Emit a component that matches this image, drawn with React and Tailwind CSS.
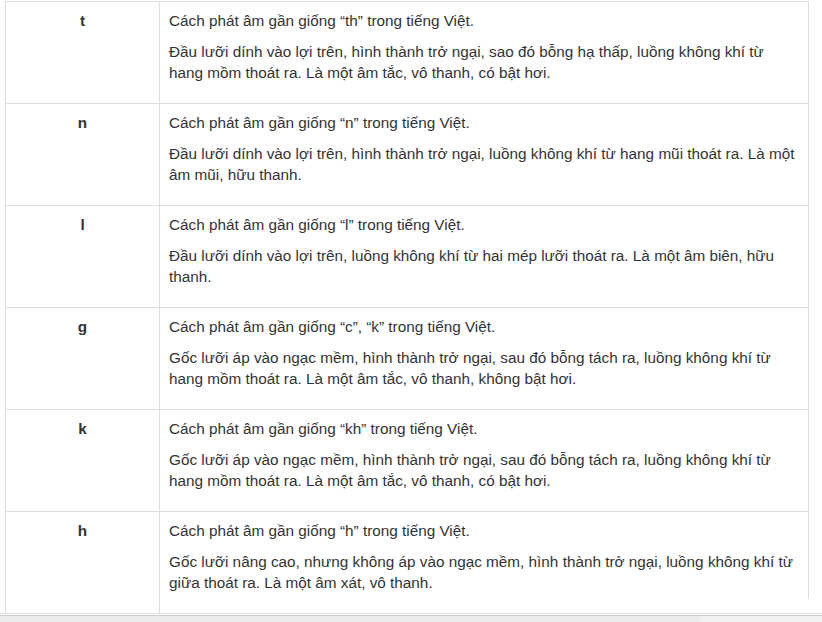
import React from 'react'

const rows = [
  {
    letter: 't',
    like: '“th”',
    desc: 'Đầu lưỡi dính vào lợi trên, hình thành trở ngại, sao đó bỗng hạ thấp, luồng không khí từ hang mồm thoát ra. Là một âm tắc, vô thanh, có bật hơi.',
  },
  {
    letter: 'n',
    like: '“n”',
    desc: 'Đầu lưỡi dính vào lợi trên, hình thành trở ngại, luồng không khí từ hang mũi thoát ra. Là một âm mũi, hữu thanh.',
  },
  {
    letter: 'l',
    like: '“l”',
    desc: 'Đầu lưỡi dính vào lợi trên, luồng không khí từ hai mép lưỡi thoát ra. Là một âm biên, hữu thanh.',
  },
  {
    letter: 'g',
    like: '“c”, “k”',
    desc: 'Gốc lưỡi áp vào ngạc mềm, hình thành trở ngại, sau đó bỗng tách ra, luồng không khí từ hang mồm thoát ra. Là một âm tắc, vô thanh, không bật hơi.',
  },
  {
    letter: 'k',
    like: '“kh”',
    desc: 'Gốc lưỡi áp vào ngạc mềm, hình thành trở ngại, sau đó bỗng tách ra, luồng không khí từ hang mồm thoát ra. Là một âm tắc, vô thanh, có bật hơi.',
  },
  {
    letter: 'h',
    like: '“h”',
    desc: 'Gốc lưỡi nâng cao, nhưng không áp vào ngạc mềm, hình thành trở ngại, luồng không khí từ giữa thoát ra. Là một âm xát, vô thanh.',
  },
]

const App = () => {
  return (
    <div className="w-[822px] h-[622px] overflow-hidden bg-white flex flex-col font-['Liberation_Sans',Arial,sans-serif] text-[15.3px] leading-[21px] text-[#333]">
      {/* Table area */}
      <div className="h-[613px] overflow-hidden pt-px">
        <div className="ml-[5px] w-[804px]">
          {rows.map((row, index) => {
            const last = index === rows.length - 1
            return (
              <div key={row.letter} className="grid grid-cols-[154px_650px] h-[102px] border-t border-[#ddd]">
                <div className="border-l border-[#ddd] pt-[8px] text-center font-bold">
                  {row.letter}
                </div>
                <div
                  className={
                    last
                      ? 'border-l border-[#ddd] pl-[9px] pr-[10px] pt-[8px] bg-[linear-gradient(#ddd,#ddd)] bg-no-repeat bg-right-top bg-[length:1px_87px]'
                      : 'border-l border-r border-[#ddd] pl-[9px] pr-[9px] pt-[8px]'
                  }
                >
                  <p className="mb-[10px]">Cách phát âm gần giống {row.like} trong tiếng Việt.</p>
                  <p>{row.desc}</p>
                </div>
              </div>
            )
          })}
        </div>
      </div>

      {/* Bottom scroll bar */}
      <div className="h-px bg-[#ddd]" />
      <div className="h-px bg-white" />
      <div className="h-px bg-[#c9c9c9]" />
      <div className="flex-1 flex">
        <div className="w-[700px] bg-[#ebebeb]" />
        <div className="flex-1 bg-[#f1f1f1]" />
      </div>
    </div>
  )
}

export default App
